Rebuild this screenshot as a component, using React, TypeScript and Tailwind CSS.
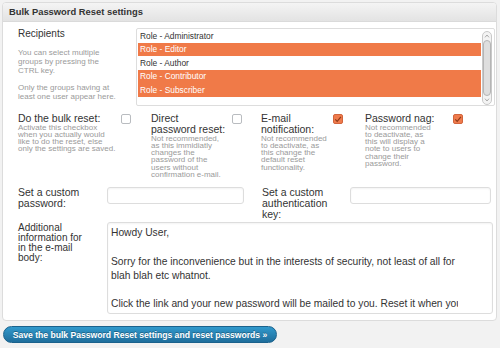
const roles = [
  { label: "Role - Administrator", selected: false },
  { label: "Role - Editor", selected: true },
  { label: "Role - Author", selected: false },
  { label: "Role - Contributor", selected: true },
  { label: "Role - Subscriber", selected: true },
];

const mailLines = [
  "Howdy User,",
  "",
  "Sorry for the inconvenience but in the interests of security, not least of all for",
  "blah blah etc whatnot.",
  "",
  "Click the link and your new password will be mailed to you. Reset it when you get a chance.",
];

function Checkbox({ checked }: { checked?: boolean }) {
  if (checked) {
    return (
      <span className="mt-[1.5px] flex h-[10px] w-[10px] shrink-0 items-center justify-center rounded-[2px] border border-[#d2653d] bg-[#ef7b4d]">
        <svg viewBox="0 0 10 10" className="h-[9px] w-[9px]">
          <path d="M1.6 4.8 L4 7.4 L8.6 1.8" fill="none" stroke="#8e3a17" strokeWidth="1.5" />
        </svg>
      </span>
    );
  }
  return <span className="mt-[1.5px] block h-[10px] w-[10px] shrink-0 rounded-[2px] border border-[#b9bcc0] bg-white" />;
}

function Scrollbar() {
  return (
    <div className="ml-[1.5px] mt-[1px] flex h-[74px] w-[10px] shrink-0 flex-col items-center rounded-full border border-[#c9c9c9] bg-[#f3f3f3]">
      <svg viewBox="0 0 8 6" className="mt-[2px] h-[4px] w-[6px]">
        <path d="M1 5 L4 1.5 L7 5" fill="none" stroke="#888" strokeWidth="1" />
      </svg>
      <div className="mt-[2px] h-[56px] w-[8px] rounded-full border border-[#b5b5b5] bg-[#dedede]" />
      <svg viewBox="0 0 8 6" className="mt-[2px] h-[4px] w-[6px]">
        <path d="M1 1 L4 4.5 L7 1" fill="none" stroke="#888" strokeWidth="1" />
      </svg>
    </div>
  );
}

export default function App() {
  return (
    <div className="h-[348px] w-[500px] bg-[#f2f2f2] px-[2px] pt-[2px] font-['Liberation_Sans',Arial,sans-serif] text-[#333]">
      <div className="w-[495px] rounded-[4px] border border-[#dcdcdc] bg-white">
        <div className="flex h-[19px] items-center rounded-t-[3px] border-b border-[#dadada] bg-gradient-to-b from-[#f4f4f4] to-[#e3e3e3] pl-[6px]">
          <h3 className="text-[9.4px] font-bold text-[#333]">Bulk Password Reset settings</h3>
        </div>

        <div className="pb-[6.5px] pt-[6px]">
          {/* recipients */}
          <div className="flex pl-[15px]">
            <div className="w-[118px]">
              <div className="text-[10px] leading-[12px]">Recipients</div>
              <div className="mt-[8px] w-[102px] text-[8px] leading-[9px] text-[#9a9a9a]">
                <p>You can select multiple groups by pressing the CTRL key.</p>
                <p className="mt-[8px]">Only the groups having at least one user appear here.</p>
              </div>
            </div>
            <div className="mr-[1px] flex h-[78px] flex-1 rounded-[2px] border border-[#dddddd] bg-white pl-[1px] pt-[0.7px]">
              <div className="flex-1">
                {roles.map((role) => (
                  <div
                    key={role.label}
                    className={
                      role.selected
                        ? "flex h-[13.4px] items-center bg-[#f07a48] pl-[2px] text-[8.4px] text-white"
                        : "flex h-[13.4px] items-center pl-[2px] text-[8.4px] text-[#333]"
                    }
                  >
                    {role.label}
                  </div>
                ))}
              </div>
              <Scrollbar />
              <div className="w-[2px]" />
            </div>
          </div>

          {/* checkboxes */}
          <div className="mt-[6.5px] flex pl-[15px]">
            <div className="flex w-[133px]">
              <div className="w-[103px] pr-[4px]">
                <div className="text-[10.5px] leading-[11px]">Do the bulk reset:</div>
                <div className="text-[8px] leading-[7.3px] text-[#9a9a9a]">
                  Activate this checkbox when you actually would like to do the reset, else only the settings are saved.
                </div>
              </div>
              <Checkbox />
            </div>
            <div className="flex w-[110px]">
              <div className="w-[81px] pr-[5px]">
                <div className="text-[10.5px] leading-[11px]">
                  Direct
                  <br />
                  password reset:
                </div>
                <div className="text-[8px] leading-[7.3px] text-[#9a9a9a]">
                  Not recommended, as this immidiatly changes the password of the users without confirmation e-mail.
                </div>
              </div>
              <Checkbox />
            </div>
            <div className="flex w-[104px]">
              <div className="w-[72px] pr-[2px]">
                <div className="text-[10.5px] leading-[11px]">E-mail notification:</div>
                <div className="text-[8px] leading-[7.3px] text-[#9a9a9a]">
                  Not recommended to deactivate, as this change the default reset functionality.
                </div>
              </div>
              <Checkbox checked />
            </div>
            <div className="flex">
              <div className="w-[88px] pr-[18px]">
                <div className="text-[10.5px] leading-[11px]">Password nag:</div>
                <div className="text-[8px] leading-[7.3px] text-[#9a9a9a]">
                  Not recommended to deactivate, as this will display a note to users to change their password.
                </div>
              </div>
              <Checkbox checked />
            </div>
          </div>

          {/* custom values */}
          <div className="mt-[8.7px] flex h-[35px] pl-[15px]">
            <div className="flex w-[244px]">
              <div className="w-[89px] pr-[18px] text-[10.5px] leading-[11px]">Set a custom password:</div>
              <div className="h-[17px] w-[137px] rounded-[3px] border border-[#dddddd] bg-white shadow-[inset_0_1px_2px_rgba(0,0,0,0.05)]" />
            </div>
            <div className="flex">
              <div className="w-[88px] pr-[16px] text-[10.5px] leading-[11px]">Set a custom authentication key:</div>
              <div className="h-[17px] w-[141px] rounded-[3px] border border-[#dddddd] bg-white shadow-[inset_0_1px_2px_rgba(0,0,0,0.05)]" />
            </div>
          </div>

          {/* mail body */}
          <div className="flex pl-[15px]">
            <div className="w-[89px] pr-[18px] pt-[1px] text-[10px] leading-[10px]">
              Additional information for in the e-mail body:
            </div>
            <div className="h-[92px] w-[386px] rounded-[3px] border border-[#dddddd] bg-white pl-[3px] pt-[3px] shadow-[inset_0_1px_2px_rgba(0,0,0,0.05)]">
              <div className="w-[347px] overflow-hidden whitespace-nowrap text-[10.25px] leading-[14.3px] text-[#333]">
                {mailLines.map((line, i) => (
                  <div key={i} className="h-[14.3px]">
                    {line}
                  </div>
                ))}
              </div>
            </div>
          </div>
        </div>
      </div>

      <button className="ml-[1px] mt-[5px] flex h-[17px] w-[274px] items-center justify-center rounded-full border border-[#1b628c] bg-gradient-to-b from-[#3199cc] to-[#1f6e9c] text-[8.6px] font-bold text-white [text-shadow:0_-1px_0_rgba(0,0,0,0.3)]">
        Save the bulk Password Reset settings and reset passwords »
      </button>
    </div>
  );
}
